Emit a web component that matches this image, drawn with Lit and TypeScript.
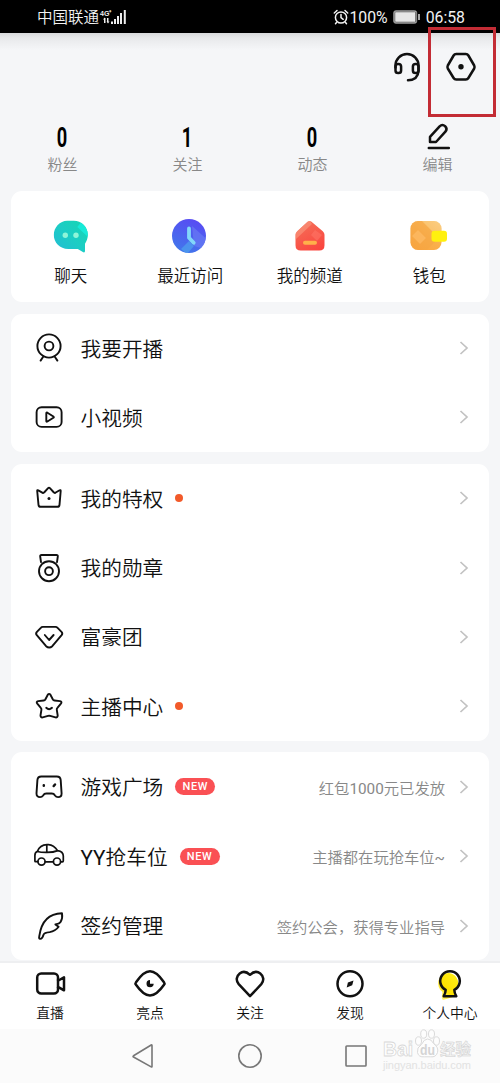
import { LitElement, html, svg, css } from "lit";
import { customElement } from "lit/decorators.js";

interface Row {
  icon: unknown;
  label: string;
  dot?: boolean;
  badge?: string;
  hint?: string;
}

const rowIcons = {
  webcam: svg`<circle cx="16" cy="14" r="11.6"/><circle cx="16" cy="14" r="4.4"/><path d="M10.2 24.8 7.6 28.6M21.8 24.8l2.6 3.8"/>`,
  play: svg`<rect x="3.6" y="6.3" width="25" height="19.6" rx="5"/><path d="M13.3 12.2v7.8q0 1.2 1.1.5l6-3.7q.9-.7 0-1.3l-6-3.8q-1.1-.6-1.1.5z"/>`,
  crown: svg`<path d="M4.2 9q-.1-1.3 1.1-.7l4.4 2.500q.8.400 1.400-.300l4-4.400q.9-.9 1.800 0l4 4.400q.6.700 1.400.300l4.300-2.500q1.200-.6 1.100.7l-1.200 13.800q-.2 2-2.200 2H7.700q-2 0-2.200-2z"/><circle class="solid" cx="16" cy="16.400" r="1.500"/>`,
  medal: svg`<circle cx="16" cy="19.200" r="10"/><circle cx="16" cy="19.200" r="3.900"/><path d="M8 10.200 7.200 4.500Q7 3 8.500 3h15q1.500 0 1.300 1.500L24 10.200"/>`,
  diamond: svg`<path d="M9.800 5.900h12.700q1.200 0 2.100.9l3.900 4q1.500 1.600.1 3.400l-9.300 11q-3.100 2.700-6.200 0l-9.300-11q-1.400-1.800.1-3.400l3.900-4q.8-.9 2-.9z"/><path d="m11.800 14 4.300 5 4.500-5"/>`,
  star: svg`<path d="M14.800 4.700q1.300-1.700 2.600 0l2.500 4.800q.5.900 1.600 1l5.500.6q2.400.6.900 2.500l-3.500 4.200q-.8.900-.6 2.100l.9 5.600q0 2.200-2.200 1.900l-5.300-1.500q-1.100-.3-2.200 0l-5.300 1.500q-2.200.3-2.200-1.900l.9-5.600q.2-1.200-.6-2.100L4.300 13.600q-1.500-1.900.9-2.500l5.500-.6q1.100-.1 1.600-1z"/><path d="M13.200 17.800q2.900 2.700 5.800 0"/>`,
  game: svg`<path d="M8.300 5.500h15.500q3.600 0 3.900 3.600l.9 13.300q0 3.700-3.500 3.700-2 0-3.100-1.700-1.100-1.900-3.300-1.900h-5.300q-2.200 0-3.300 1.900Q9 26.100 7 26.100q-3.500 0-3.500-3.700l.9-13.300q.3-3.600 3.900-3.600z"/><path d="M10.800 14.300v.4M22 13.500l-1.300 1.500" stroke-width="2.500"/>`,
  car: svg`<g stroke-width="1.700"><circle cx="8.500" cy="21.600" r="3.600"/><circle cx="24" cy="21.600" r="3.600"/><path d="M12.100 21.800h8.300M4.900 21.700H2.500q-.6 0-.6-.7v-5.600q.1-3.200 2.500-4Q6.800 4.900 14 4.600h1.500q5.200.2 9.100 6 5.700.9 5.700 5.500v4.700q0 1-.9 1h-1.800M4.400 11.500q3.500 1 9.600.9 6.600 0 10.600-1.800M13.800 4.800v7.400"/></g>`,
  feather: svg`<path d="M7.200 28.900q-1.600.1-.9-2.800Q9.500 3.700 29 3.300q.8 5-1.400 8.600-1 1.900-5.200 2.600l3.200 2.300q-3.300 4.500-8.900 5.300-5.400.5-6.200 2.700-1.100 4.200-3.300 4.100z"/>`,
};

const groups: Row[][] = [
  [
    { icon: rowIcons.webcam, label: "我要开播" },
    { icon: rowIcons.play, label: "小视频" },
  ],
  [
    { icon: rowIcons.crown, label: "我的特权", dot: true },
    { icon: rowIcons.medal, label: "我的勋章" },
    { icon: rowIcons.diamond, label: "富豪团" },
    { icon: rowIcons.star, label: "主播中心", dot: true },
  ],
  [
    { icon: rowIcons.game, label: "游戏广场", badge: "NEW", hint: "红包1000元已发放" },
    { icon: rowIcons.car, label: "YY抢车位", badge: "NEW", hint: "主播都在玩抢车位~" },
    { icon: rowIcons.feather, label: "签约管理", hint: "签约公会，获得专业指导" },
  ],
];

const shortcuts = [
  {
    label: "聊天",
    art: svg`<defs><linearGradient id="g" x1="0" y1="1" x2="1" y2="0"><stop offset="0" stop-color="#25b8d8"/><stop offset=".5" stop-color="#1ccdc4"/><stop offset="1" stop-color="#12d9ae"/></linearGradient><clipPath id="c"><path d="M17 4.800h6.500c7.500 0 14 6 14 14 0 4-1.200 6.500-2.800 9v7.200q0 1.900-1.700 1.300L27.500 33H18C9.500 33 3.500 26.500 3.500 19S9.500 4.800 17 4.800z"/></clipPath></defs>
    <g transform="translate(-.7 0)"><g clip-path="url(#c)"><rect width="40" height="40" fill="url(#g)"/><path d="m31 6 10 10v8L27 11z" fill="#16ead8"/></g><circle cx="15" cy="19.200" r="2.700" fill="#8ff5d8"/><circle cx="25.700" cy="19.200" r="2.700" fill="#8ff5d8"/></g>`,
  },
  {
    label: "最近访问",
    art: svg`<defs><linearGradient id="g" x1=".7" y1="0" x2=".3" y2="1"><stop offset="0" stop-color="#5b46f4"/><stop offset="1" stop-color="#3f7bea"/></linearGradient><clipPath id="c"><circle cx="19" cy="20" r="17"/></clipPath></defs>
    <g clip-path="url(#c)"><rect width="40" height="40" fill="url(#g)"/><path d="m22 10 18 16-2 8-14-4z" fill="#6a7cf5" opacity=".65"/><path d="m19 25 5 5-7 8-6-5z" fill="#4fa3ee" opacity=".7"/></g><path d="M19 12.500v9.300l4.700 5" fill="none" stroke="#82d8fa" stroke-width="3.800" stroke-linecap="round" stroke-linejoin="round"/>`,
  },
  {
    label: "我的频道",
    art: svg`<defs><linearGradient id="g" x1=".2" y1="0" x2=".7" y2="1"><stop offset="0" stop-color="#f4775d"/><stop offset="1" stop-color="#fb3f3b"/></linearGradient><clipPath id="c"><path d="M17.500 5.800q2-1.700 4 0l11.300 9.400q1.700 1.500 1.700 3.500v10.600q0 5.200-5.200 5.200H10.700q-5.200 0-5.200-5.200V18.700q0-2 1.700-3.500z"/></clipPath></defs>
    <g clip-path="url(#c)"><rect width="40" height="40" fill="url(#g)"/><path d="M19.500 4 5 17v7L22 8z" fill="#fa9a80" opacity=".6"/><path d="m25 14 7 5-5 6-6-6z" fill="#ff7668" opacity=".55"/></g><rect x="13" y="24.700" width="14" height="4" rx="2" fill="#ffb04a"/>`,
  },
  {
    label: "钱包",
    art: svg`<defs><linearGradient id="g" x1="1" y1="0" x2=".3" y2="1"><stop offset="0" stop-color="#fbd38c"/><stop offset=".5" stop-color="#f9b352"/><stop offset="1" stop-color="#fba43c"/></linearGradient><clipPath id="c"><rect x="1.500" y="5" width="31" height="29" rx="7.500"/></clipPath></defs>
    <g clip-path="url(#c)"><rect width="40" height="40" fill="url(#g)"/><path d="M12 4 30 22 16 36H0V4z" fill="#f4a443" opacity=".45"/><path d="M12 4 30 22 40 10V4z" fill="#fcd894" opacity=".4"/><path d="m9 14 8 8-6 6-8-8z" fill="#ffc06c" opacity=".6"/></g><rect x="22.500" y="14.700" width="15.500" height="11" rx="3" fill="#fff00f"/>`,
  },
];

const tabs = [
  {
    label: "直播",
    art: svg`<rect x="5.200" y="7.400" width="20.800" height="20.200" rx="4"/><path d="M26 14h1.300l4.700-2.700v13L27.300 21.600H26"/>`,
  },
  {
    label: "亮点",
    art: svg`<path d="M4 16.200Q11.500 5.200 18 5.200t14 11q1 1.300 0 2.600-7.500 10.800-14 10.800T4 18.800q-1-1.300 0-2.600z"/><path class="solid" stroke="none" d="M18 14v3.700h3.700A3.600 3.600 0 1 1 18 14z"/>`,
  },
  {
    label: "关注",
    art: svg`<path d="M18 30.200 6.700 18.200C3.700 14.800 4.300 10 7.700 7.400 10.500 5.300 14.500 5.500 18 8.800c3.500-3.300 7.500-3.500 10.300-1.400 3.400 2.600 4 7.400 1 10.800z"/>`,
  },
  {
    label: "发现",
    art: svg`<circle cx="18" cy="17.700" r="12.500"/><path class="solid" stroke="none" d="m21.500 14.400-1.300 4.800-5.500 2.200 1.200-5z"/>`,
  },
  {
    label: "个人中心",
    art: svg`<defs><linearGradient id="g" x1="1" y1="0" x2="0" y2="1"><stop offset="0" stop-color="#fff01a"/><stop offset=".6" stop-color="#fde100"/><stop offset="1" stop-color="#fff9b0"/></linearGradient></defs><path fill="url(#g)" stroke="none" d="M17 7a10.500 10.500 0 0 1 6 18l1 5-13 4q-2-1-.5-8A10.500 10.500 0 0 1 17 7z"/><path d="M13.700 23.800a9.800 9.800 0 1 1 8.600 0q.1 3.400 2 6.400H11.700q1.900-3 2-6.400z"/>`,
  },
];

@customElement("app-root")
export class AppRoot extends LitElement {
  static styles = css`
    :host {
      display: flex;
      flex-direction: column;
      position: relative;
      width: 500px;
      height: 1083px;
      overflow: hidden;
      background: #f5f6f8;
      color: #111;
      font-family: Roboto, "Noto Sans CJK SC", sans-serif;
      font-weight: 350;
    }
    * { box-sizing: border-box; }
    svg { display: block; flex: none; overflow: visible; }
    .status {
      flex: none;
      height: 33px;
      padding: 0 35px 0 37px;
      background: #000;
      color: #f2f2f2;
      display: flex;
      align-items: center;
      justify-content: space-between;
      font-size: 15.500px;
      line-height: 32px;
      font-weight: 400;
    }
    .side { display: flex; align-items: center; white-space: nowrap; padding-top: 1px; }
    .carrier { font-weight: 350; padding-top: 1px; }
    .signal { margin-left: 1px; }
    .net { font: 700 8px "Liberation Sans", sans-serif; fill: #eee; }
    .power { margin: 0 5px 0 5px; }
    .clock { font-size: 15.800px; padding-top: 1px; }
    .actions {
      flex: none;
      height: 68px;
      padding-right: 23px;
      display: flex;
      justify-content: flex-end;
      align-items: center;
      gap: 22px;
      background: linear-gradient(#d9dadc, #e8e9eb 5px, #f5f6f8 17px);
    }
    .line {
      fill: none;
      stroke: #111;
      stroke-width: 1.900;
      stroke-linecap: round;
      stroke-linejoin: round;
    }
    .bold { stroke-width: 2.500; }
    .solid { fill: #111; stroke: none; }
    .stats {
      flex: none;
      height: 90px;
      padding-top: 20px;
      display: grid;
      grid-template-columns: repeat(4, 1fr);
    }
    .stat { display: flex; flex-direction: column; align-items: center; }
    .value {
      height: 32px;
      display: flex;
      align-items: center;
      font-size: 28px;
      line-height: 32px;
      font-weight: 700;
      color: #000;
    }
    .digit { transform: scaleX(0.65); padding-top: 2px; }
    .caption { font-size: 15px; line-height: 25px; color: #888; }
    .card {
      flex: none;
      margin: 0 11px 11.500px;
      background: #fff;
      border-radius: 11px;
    }
    .shortcuts {
      height: 111px;
      padding-top: 24.500px;
      display: grid;
      grid-template-columns: repeat(4, 1fr);
    }
    .row {
      height: 69.300px;
      padding: 0 20px 0 21.500px;
      display: flex;
      align-items: center;
    }
    .label { margin-left: 16px; padding-top: 3px; font-size: 20.700px; line-height: 30px; }
    .latin { font-weight: 400; }
    .dot { width: 8px; height: 8px; margin-left: 12px; border-radius: 50%; background: #f25a2a; }
    .badge {
      width: 40px;
      height: 17px;
      margin-left: 12px;
      border-radius: 9px;
      background: #fa5054;
      color: #fff;
      font: 500 11px/17px Roboto, sans-serif;
      letter-spacing: 0.600px;
      text-align: center;
    }
    .hint { margin-left: auto; font-size: 15.300px; color: #888; }
    .arrow { margin-left: auto; }
    .hint + .arrow { margin-left: 14px; }
    .scroll { flex: none; height: 770px; overflow: hidden; }
    .tabs {
      flex: none;
      height: 67.500px;
      border-top: 2px solid #eeeff1;
      background: #fff;
      display: grid;
      grid-template-columns: repeat(5, 1fr);
    }
    .tab { padding-top: 3px; display: flex; flex-direction: column; align-items: center; }
    .tabname { font-size: 13.800px; line-height: 22px; }
    .nav {
      flex: 1;
      background: #fbfbfb;
      padding: 0 131px;
      display: flex;
      align-items: center;
      justify-content: space-between;
    }
    .soft { fill: none; stroke: #777; stroke-width: 1.600; stroke-linejoin: round; }
    .frame {
      position: absolute;
      left: 428px;
      top: 27px;
      width: 68px;
      height: 90px;
      border: 3px solid #c32c35;
    }
    .mark {
      position: absolute;
      left: 382px;
      top: 1028px;
    }
    .logo { font: 700 20px "Liberation Sans", "Noto Sans CJK SC", sans-serif; fill: #fff; stroke: #d8d8d8; stroke-width: 0.800; }
    .du { font-size: 14px; fill: #d4d4d4; stroke: none; }
    .han { font-size: 15.500px; fill: #f4f4f4; stroke: #d0d0d0; stroke-width: 0.500; }
    .site { font: 400 11px "Liberation Sans", sans-serif; fill: #e2e2e2; }
    .paw { fill: #fdfdfd; stroke: #dadada; stroke-width: 1; }
  `;

  /* Latin runs are set in the regular weight beside the lighter Chinese text. */
  private mixed(text: string) {
    return text
      .split(/([A-Za-z0-9~]+)/)
      .filter((part) => part)
      .map((part) => (/^[A-Za-z0-9~]/.test(part) ? html`<span class="latin">${part}</span>` : part));
  }

  private renderRow(row: Row) {
    return html`<div class="row">
      <svg class="line" width="32" height="32" viewBox="0 0 32 32">${row.icon}</svg>
      <span class="label">${this.mixed(row.label)}</span>
      ${row.dot ? html`<span class="dot"></span>` : ""}
      ${row.badge ? html`<span class="badge">${row.badge}</span>` : ""}
      ${row.hint ? html`<span class="hint">${this.mixed(row.hint)}</span>` : ""}
      <svg class="arrow" width="10" height="14" viewBox="0 0 10 14">
        <path d="m1.500 1 6.500 6-6.500 6" fill="none" stroke="#c2c2c2" stroke-width="1.700"/>
      </svg>
    </div>`;
  }

  render() {
    return html`
      <div class="status">
        <div class="side">
          <span class="carrier">中国联通</span>
          <svg class="signal" width="28" height="18" viewBox="0 0 28 18">
            <text class="net" x="0" y="7.500" textLength="12" lengthAdjust="spacingAndGlyphs">4G⁺</text>
            <g fill="#eee"><path d="M4 10h1.500v5H4zM7 10h1.500v5H7zM3 11.500l1.700-2 1 2zM6.500 13.500h3l-1.500 2zM11 13.500h2V16h-2zM14 11h2v5h-2zM17 8h2v8h-2zM20 5h2v11h-2zM23.800 2h2v14h-2z"/></g>
          </svg>
        </div>
        <div class="side">
          <svg width="16" height="16" viewBox="0 0 16 16" fill="none" stroke="#f2f2f2" stroke-width="1.500" stroke-linecap="round">
            <circle cx="8" cy="8.500" r="5.600"/><path d="M8 5.500v3.200l2.200 1.600M1.300 4 4 1.500M14.700 4 12 1.500M3.500 13.500l-1 1.200M12.500 13.500l1 1.200"/>
          </svg>
          <span class="clock">100%</span>
          <svg class="power" width="28" height="14" viewBox="0 0 28 14">
            <rect x=".7" y=".7" width="23" height="12.600" rx="2" fill="#e6e6e6" stroke="#888"/><rect x="1.800" y="1.800" width="20.800" height="10.400" rx="1" fill="none" stroke="#222" stroke-width=".6"/><path d="M26 4v6" stroke="#ddd" stroke-width="1.500"/>
          </svg>
          <span class="clock">06:58</span>
        </div>
      </div>
      <div class="actions">
        <svg class="line bold" width="32" height="32" viewBox="0 -1 32 32">
          <path d="M4.500 15.500V13.500a11.500 11.500 0 0 1 23 0v5.500q-.5 9-10.500 9.300"/>
          <rect x="4.500" y="12" width="5.600" height="9" rx="2.600"/><rect x="21.900" y="12" width="5.600" height="9" rx="2.600"/>
        </svg>
        <svg class="line bold" width="32" height="32" viewBox="0 0 32 32">
          <path d="M11.200 3h9.600q1.700 0 2.600 1.500l5.800 10q.7 1.500 0 3l-5.800 9.500q-.9 1.500-2.600 1.500h-9.600q-1.700 0-2.600-1.500l-5.800-9.500q-.7-1.500 0-3l5.800-10Q9.500 3 11.200 3z"/><circle class="solid" cx="16" cy="15.800" r="2.700"/>
        </svg>
      </div>
      <div class="stats">
        ${[["0", "粉丝"], ["1", "关注"], ["0", "动态"]].map(
          ([n, t]) => html`<div class="stat"><div class="value"><span class="digit">${n}</span></div><span class="caption">${t}</span></div>`
        )}
        <div class="stat">
          <div class="value">
            <svg class="line bold" width="28" height="32" viewBox="0 0 28 32">
              <path d="M4.800 26.900h20M6 21v-5.200L15.600 5.300q2.700-2.600 5.500-.2 2.700 2.700.3 5.600L12 21z"/>
            </svg>
          </div>
          <span class="caption">编辑</span>
        </div>
      </div>
      <div class="scroll">
        <div class="card shortcuts">
          ${shortcuts.map((s) => html`<app-shortcut .art=${s.art} .label=${s.label}></app-shortcut>`)}
        </div>
        ${groups.map((g) => html`<div class="card">${g.map((r) => this.renderRow(r))}</div>`)}
      </div>
      <div class="tabs">
        ${tabs.map(
          (t) => html`<div class="tab">
            <svg class="line bold" width="36" height="36" viewBox="0 0 36 36">${t.art}</svg>
            <span class="tabname">${t.label}</span>
          </div>`
        )}
      </div>
      <div class="nav">
        <svg class="soft" width="24" height="26" viewBox="0 0 24 26"><path d="M21 2.500v21q0 .8-.8.400L2.500 14q-.9-.600 0-1.200L20.200 2q.8-.400.8.500z"/></svg>
        <svg class="soft" width="26" height="26" viewBox="-1 0 26 26"><circle cx="13" cy="13" r="11.200"/></svg>
        <svg class="soft" width="26" height="26" viewBox="0 0 26 26"><rect x="3" y="3" width="20" height="20" rx=".8"/></svg>
      </div>
      <svg class="mark" width="92" height="46" viewBox="0 0 92 46">
        <g class="paw"><ellipse cx="36.500" cy="13" rx="3" ry="4.200"/><ellipse cx="41.700" cy="6" rx="3" ry="4.200"/><ellipse cx="49.500" cy="6" rx="3" ry="4.200"/><ellipse cx="54.500" cy="13" rx="3" ry="4.200"/><path d="M45.500 11q4 0 6 4.500 5.500 4 4 9-1.500 5-7 4.300h-6q-6 .7-7-4.300-1-5 4-8 2.500-5.500 6-5.500z"/></g>
        <text class="logo" x="1" y="28" textLength="30" lengthAdjust="spacingAndGlyphs">Bai</text>
        <text class="logo du" x="38" y="26.500" textLength="15" lengthAdjust="spacingAndGlyphs">du</text>
        <text class="logo han" x="58" y="27">经验</text>
        <text class="site" x="1" y="41" textLength="88">jingyan.baidu.com</text>
      </svg>
      <div class="frame"></div>
    `;
  }
}

/* One entry of the shortcut card; its own shadow root keeps the gradient and clip ids apart. */
@customElement("app-shortcut")
export class AppShortcut extends LitElement {
  static properties = { art: { attribute: false }, label: {} };
  declare art: unknown;
  declare label: string;

  static styles = css`
    :host { display: flex; flex-direction: column; align-items: center; }
    .art { display: block; width: 40px; height: 40px; }
    .name { font-size: 16.500px; line-height: 24px; margin-top: 9.500px; white-space: nowrap; }
  `;

  render() {
    return html`<svg class="art" viewBox="0 0 40 40">${this.art}</svg><span class="name">${this.label}</span>`;
  }
}
